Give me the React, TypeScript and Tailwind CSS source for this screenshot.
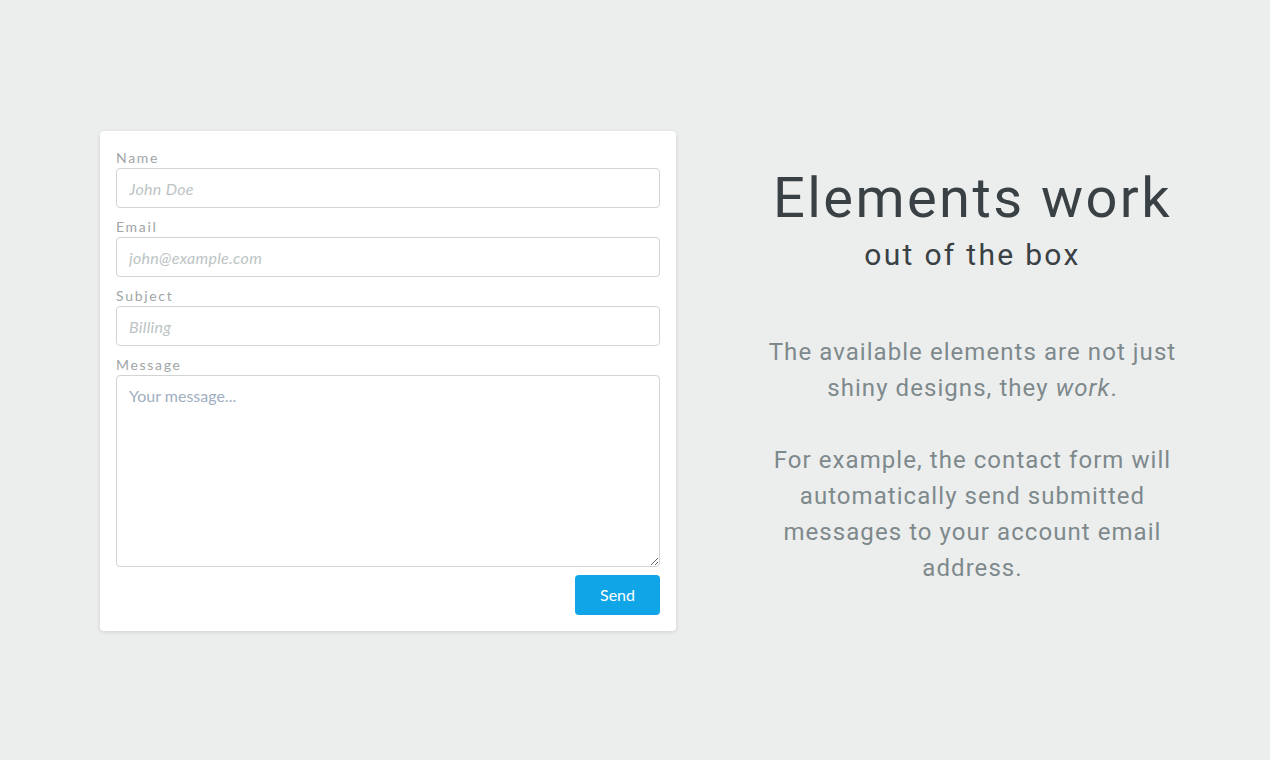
const fields = [
  { label: "Name", placeholder: "John Doe" },
  { label: "Email", placeholder: "john@example.com" },
  { label: "Subject", placeholder: "Billing" },
];

export default function App() {
  return (
    <main className="flex min-h-[760px] items-center bg-[#eceeee] pt-[2px] pl-[100px]">
      <form className="flex w-[576px] flex-col rounded bg-white p-4 font-['Lato',sans-serif] shadow-[0_1px_4px_rgba(0,0,0,0.12)]">
        {fields.map((f) => (
          <div key={f.label} className="mb-2">
            <label className="block h-[21px] text-sm leading-[21.5px] tracking-[1.7px] text-[#a0a6a6]">
              {f.label}
            </label>
            <input
              placeholder={f.placeholder}
              className="block h-10 w-full rounded border border-[#d0d4d4] bg-white px-3 text-base outline-none placeholder:tracking-[0.3px] placeholder:text-[#bcc4c4] placeholder:italic"
            />
          </div>
        ))}
        <label className="block h-[21px] text-sm leading-[21.5px] tracking-[1.7px] text-[#a0a6a6]">
          Message
        </label>
        <textarea
          placeholder="Your message..."
          className="block h-[192px] w-full rounded border border-[#d0d4d4] bg-white px-3 py-2 text-base leading-6 outline-none placeholder:text-[#a0aec0]"
        />
        <div className="mt-2 flex justify-end">
          <button
            type="button"
            className="h-10 w-[85px] rounded-sm bg-[#10a5e6] text-base text-white"
          >
            Send
          </button>
        </div>
      </form>

      <section className="flex-1 pr-[73px] pb-3 pl-[72px] text-center font-['Roboto',sans-serif]">
        <h1 className="text-[56px] leading-[68px] font-normal tracking-[2.45px] text-[#3a4145]">
          Elements work
        </h1>
        <h2 className="text-[30px] leading-[46px] font-normal tracking-[2.3px] text-[#3a4145]">
          out of the box
        </h2>
        <div className="mt-[56px] text-2xl leading-9 font-normal tracking-[1.06px] text-[#7e898c]">
          <p>
            The available elements are not just shiny designs, they <em>work</em>.
          </p>
          <p className="mt-9">
            For example, the contact form will automatically send submitted messages to your account email address.
          </p>
        </div>
      </section>
    </main>
  );
}
